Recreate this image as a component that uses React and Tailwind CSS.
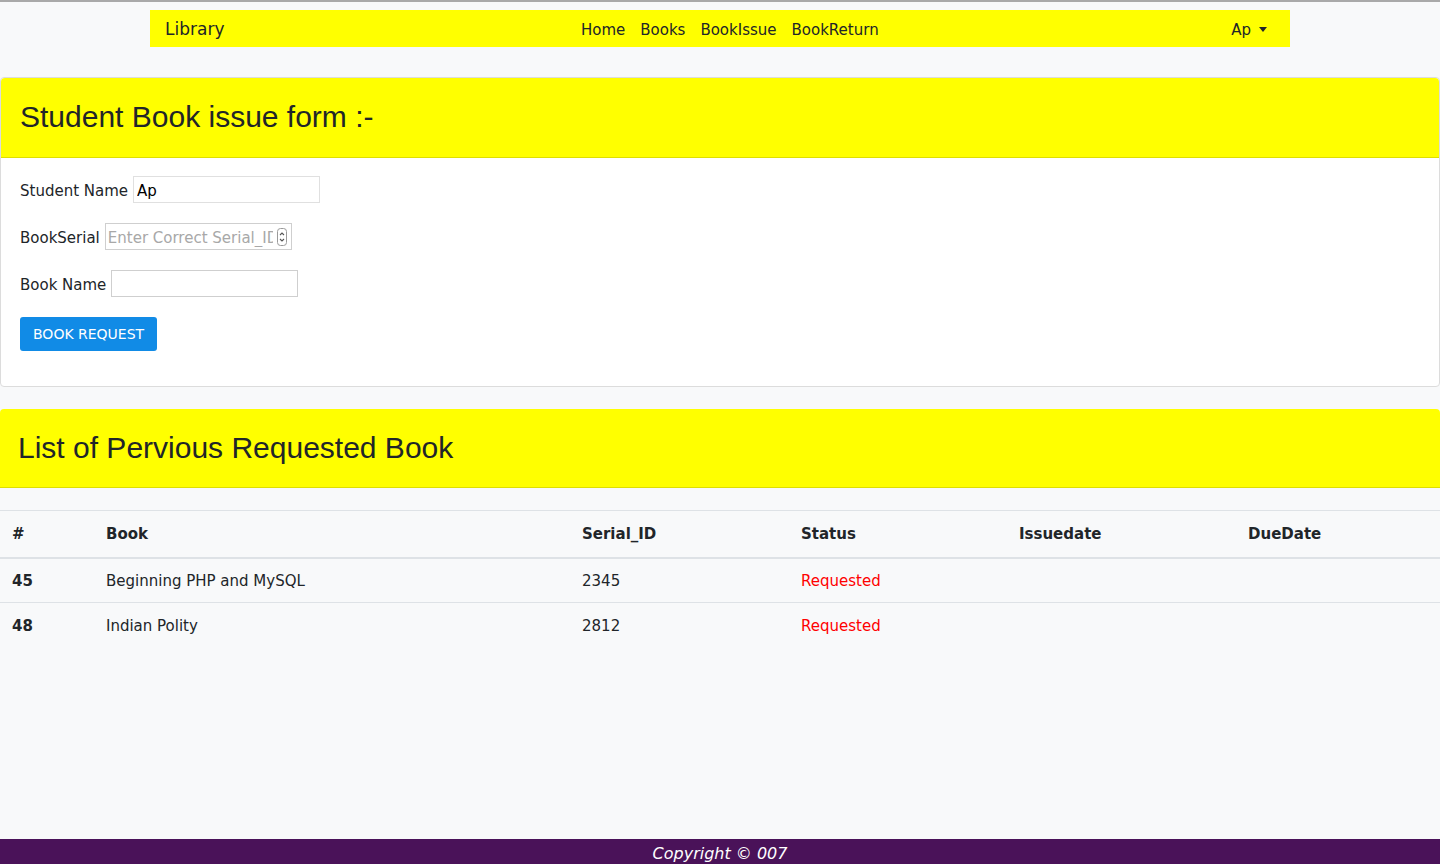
import React from 'react';

const rows = [
  { id: 45, book: 'Beginning PHP and MySQL', serial: '2345', status: 'Requested' },
  { id: 48, book: 'Indian Polity', serial: '2812', status: 'Requested' },
];

const App = () => {
  return (
    <div className="min-h-[864px] flex flex-col bg-[#f8f9fa] text-[#212529] font-['DejaVu_Sans',sans-serif] text-[15px] border-t-2 border-[#a9a9a9]">
      {/* Navbar */}
      <div className="px-[150px] pt-2">
        <nav className="h-[37px] bg-[#ffff00] flex items-center pt-[3px] pl-[15px] pr-[23px]">
          <span className="text-[17px] leading-none -mt-[1px]">Library</span>
          <div className="flex items-center ml-[349px]">
            <a className="px-[7.5px]">Home</a>
            <a className="px-[7.5px]">Books</a>
            <a className="px-[7.5px]">BookIssue</a>
            <a className="px-[7.5px]">BookReturn</a>
          </div>
          <div className="ml-auto flex items-center gap-[8px]">
            <span>Ap</span>
            <span className="w-0 h-0 border-t-[5px] border-t-[#212529] border-x-[4px] border-x-transparent -mt-[2px]" />
          </div>
        </nav>
      </div>

      {/* Issue form card */}
      <div className="mt-[30px] bg-white border border-[#dcdcdc] rounded">
        <div className="h-[80px] bg-[#ffff00] border-b border-[#dede00] rounded-t flex items-center px-[19px] pb-[2px]">
          <h1 className="font-['Liberation_Sans',sans-serif] text-[30px] leading-none">Student Book issue form :-</h1>
        </div>
        <div className="px-[19px] pt-[18px] pb-[35px] flex flex-col gap-5">
          <div className="flex items-center gap-[5px]">
            <label className="pt-1">Student Name</label>
            <input
              className="w-[187px] h-[27px] border border-[#e0e0e0] px-[3px] pt-[2px] text-black outline-none"
              type="text"
              defaultValue="Ap"
            />
          </div>
          <div className="flex items-center gap-[5px]">
            <label className="pt-1">BookSerial</label>
            <div className="w-[187px] h-[27px] border border-[#cfcfcf] flex items-center gap-[4px] pl-[2px] pr-[4px]">
              <input
                className="flex-1 min-w-0 pt-[3px] outline-none placeholder:text-[#a8a8a8]"
                type="text"
                placeholder="Enter Correct Serial_ID"
              />
              <svg width="10" height="18" viewBox="0 0 10 18" className="shrink-0">
                <rect x="0.5" y="0.5" width="9" height="17" rx="3" fill="#fff" stroke="#9a9a9a" />
                <path d="M3 7 L5 5 L7 7" fill="none" stroke="#555" strokeWidth="1.1" />
                <path d="M3 11 L5 13 L7 11" fill="none" stroke="#555" strokeWidth="1.1" />
              </svg>
            </div>
          </div>
          <div className="flex items-center gap-[5px]">
            <label className="pt-1">Book Name</label>
            <input className="w-[187px] h-[27px] border border-[#cfcfcf] px-[3px] outline-none" type="text" />
          </div>
          <div>
            <button className="h-[34px] px-[13px] pt-[1px] bg-[#118be6] text-white text-[14px] rounded-[3px]">BOOK REQUEST</button>
          </div>
        </div>
      </div>

      {/* Previous requests */}
      <div className="mt-[22px]">
        <div className="h-[79px] bg-[#ffff00] border-b border-[#dede00] rounded-t flex items-center px-[18px]">
          <h2 className="font-['Liberation_Sans',sans-serif] text-[30px] leading-none">List of Pervious Requested Book</h2>
        </div>
        <table className="mt-[22px] w-full table-fixed border-collapse text-left">
          <thead>
            <tr className="h-[47px] border-t border-b-2 border-[#dee2e6]">
              <th className="w-[94px] px-3 font-bold">#</th>
              <th className="w-[476px] px-3 font-bold">Book</th>
              <th className="w-[219px] px-3 font-bold">Serial_ID</th>
              <th className="w-[218px] px-3 font-bold">Status</th>
              <th className="w-[229px] px-3 font-bold">Issuedate</th>
              <th className="px-3 font-bold">DueDate</th>
            </tr>
          </thead>
          <tbody>
            {rows.map((r, i) => (
              <tr key={r.id} className={i === 0 ? 'h-[45px] border-b border-[#dee2e6]' : 'h-[45px]'}>
                <td className="px-3 pt-[2px] font-bold">{r.id}</td>
                <td className="px-3 pt-[2px]">{r.book}</td>
                <td className="px-3 pt-[2px]">{r.serial}</td>
                <td className="px-3 pt-[2px] text-[#ff0000]">{r.status}</td>
                <td className="px-3"></td>
                <td className="px-3"></td>
              </tr>
            ))}
          </tbody>
        </table>
      </div>

      {/* Footer */}
      <footer className="mt-auto h-[25px] bg-[#4a1259] text-white italic text-[16px] flex items-center justify-center pt-1">
        Copyright © 007
      </footer>
    </div>
  );
};

export default App;
